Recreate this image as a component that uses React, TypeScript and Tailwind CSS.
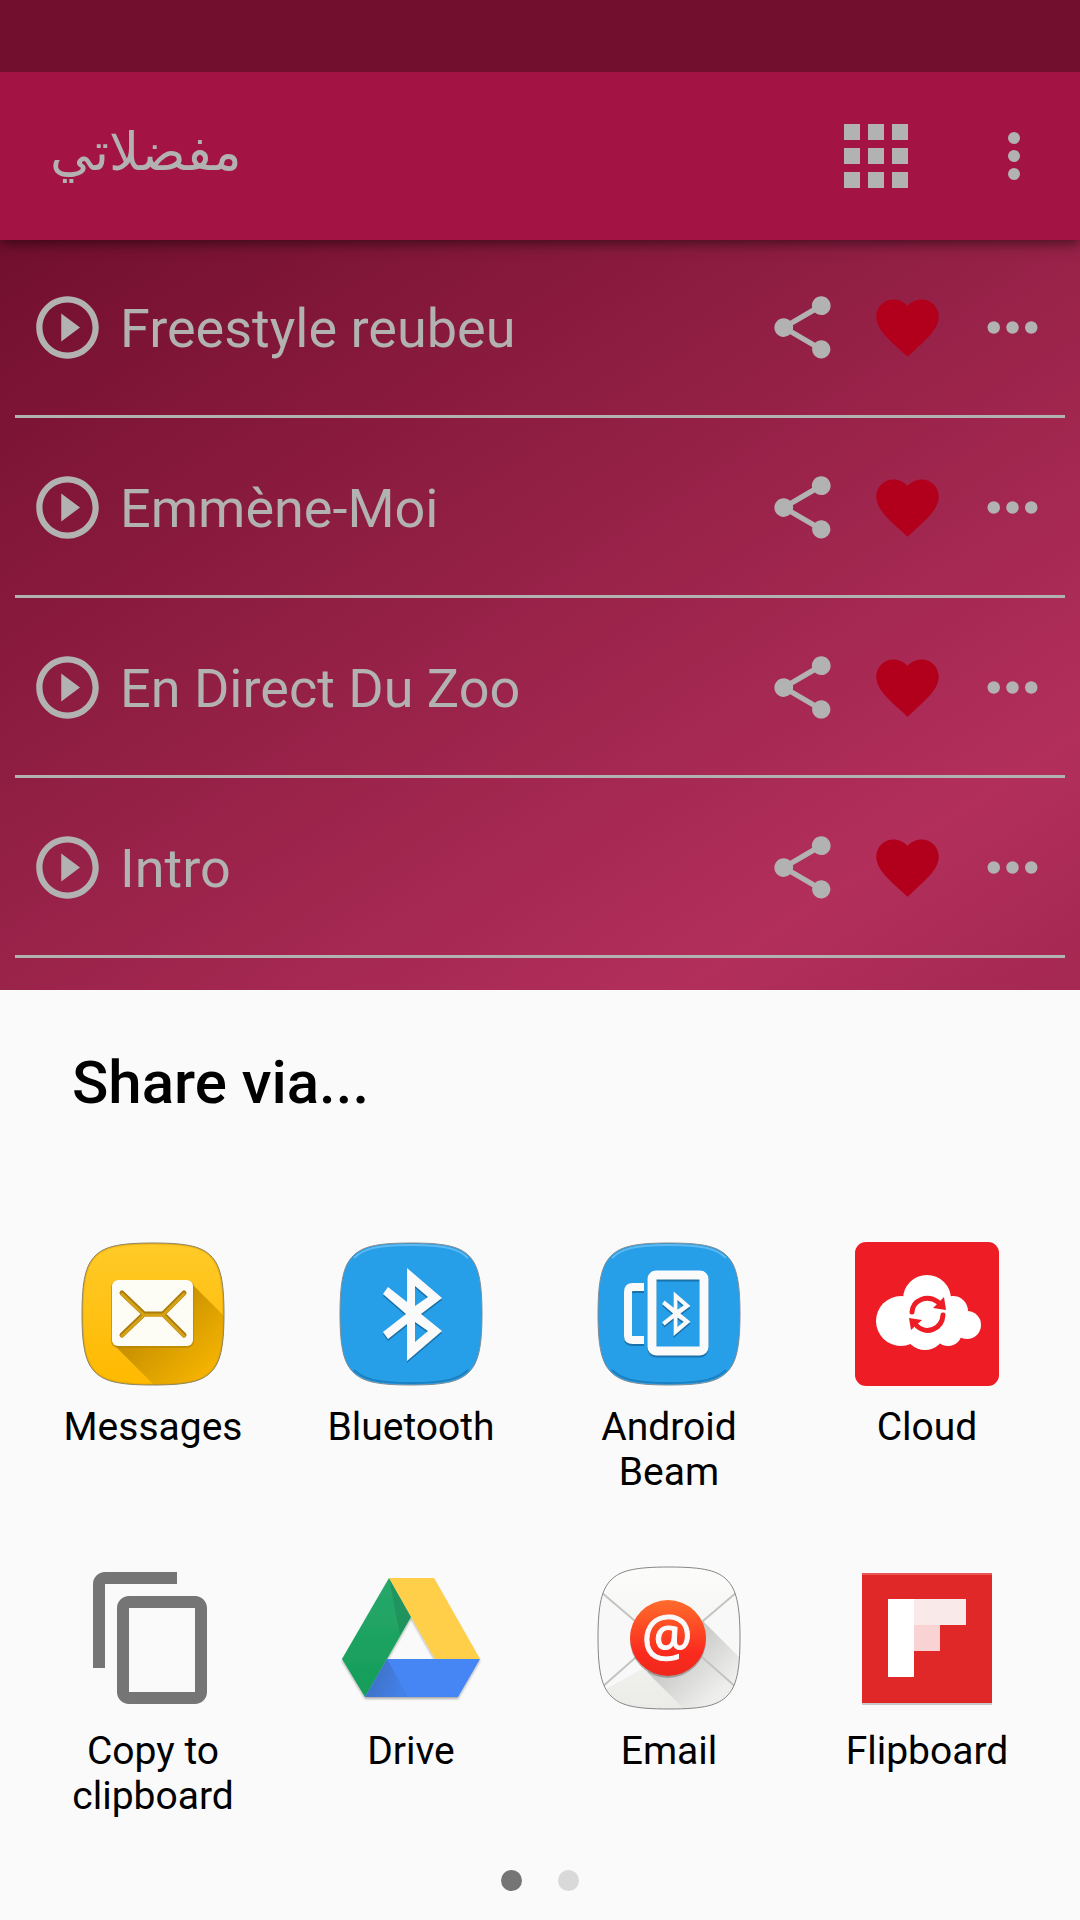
import React from 'react';

interface Track {
  id: number;
  title: string;
}

interface ShareTarget {
  label: string;
  icon: React.ReactNode;
}

const tracks: Track[] = [
  { id: 1, title: 'Freestyle reubeu' },
  { id: 2, title: 'Emmène-Moi' },
  { id: 3, title: 'En Direct Du Zoo' },
  { id: 4, title: 'Intro' },
];

const SQUIRCLE =
  'M72 1C108 1 121 5 130 14C139 23 143 38 143 72C143 106 139 121 130 130C121 139 108 143 72 143C36 143 23 139 14 130C5 121 1 106 1 72C1 38 5 23 14 14C23 5 36 1 72 1Z';

const PlayIcon = () => (
  <svg viewBox="0 0 24 24" className="size-[75px]" fill="currentColor">
    <path d="M10 16.5l6-4.5-6-4.5v9zM12 2C6.48 2 2 6.48 2 12s4.48 10 10 10 10-4.48 10-10S17.52 2 12 2zm0 18c-4.41 0-8-3.59-8-8s3.59-8 8-8 8 3.59 8 8-3.59 8-8 8z" />
  </svg>
);

const ShareIcon = () => (
  <svg viewBox="0 0 24 24" className="size-[75px]" fill="currentColor">
    <path d="M18 16.08c-.76 0-1.44.3-1.96.77L8.91 12.7c.05-.23.09-.46.09-.7s-.04-.47-.09-.7l7.05-4.11c.54.5 1.25.81 2.04.81 1.66 0 3-1.34 3-3s-1.34-3-3-3-3 1.34-3 3c0 .24.04.47.09.7L8.04 9.81C7.5 9.31 6.79 9 6 9c-1.66 0-3 1.34-3 3s1.34 3 3 3c.79 0 1.5-.31 2.04-.81l7.12 4.16c-.05.21-.08.43-.08.65 0 1.61 1.31 2.92 2.92 2.92s2.92-1.31 2.92-2.92-1.31-2.92-2.92-2.92z" />
  </svg>
);

const HeartIcon = () => (
  <svg viewBox="0 0 24 24" className="size-[75px]" fill="currentColor">
    <path d="M12 21.35l-1.45-1.32C5.4 15.36 2 12.28 2 8.5 2 5.42 4.42 3 7.5 3c1.74 0 3.41.81 4.5 2.09C13.09 3.81 14.76 3 16.5 3 19.58 3 22 5.42 22 8.5c0 3.78-3.4 6.86-8.55 11.54L12 21.35z" />
  </svg>
);

const DotsIcon = () => (
  <svg viewBox="0 0 24 24" className="size-[75px]" fill="currentColor">
    <circle cx="6" cy="12" r="2" />
    <circle cx="12" cy="12" r="2" />
    <circle cx="18" cy="12" r="2" />
  </svg>
);

const MessagesIcon = () => (
  <svg viewBox="0 0 144 144" className="size-36">
    <defs>
      <linearGradient id="msg-bg" x1="0" y1="0" x2="0" y2="1">
        <stop offset="0" stopColor="#ffca28" />
        <stop offset="1" stopColor="#ffb900" />
      </linearGradient>
      <linearGradient id="msg-shadow" gradientUnits="userSpaceOnUse" x1="60" y1="70" x2="125" y2="135">
        <stop offset="0" stopColor="#c08b00" />
        <stop offset="1" stopColor="#f6b400" />
      </linearGradient>
      <clipPath id="msg-clip">
        <path d={SQUIRCLE} />
      </clipPath>
    </defs>
    <path d={SQUIRCLE} fill="url(#msg-bg)" />
    <g clipPath="url(#msg-clip)">
      <path d="M111 42L150 81V150H80L34 104Z" fill="url(#msg-shadow)" />
      <path d={SQUIRCLE} fill="none" stroke="#e09b00" strokeWidth="3" opacity=".5" />
    </g>
    <path d={SQUIRCLE} fill="none" stroke="#8b8568" strokeWidth="1" />
    <rect x="30" y="38" width="83" height="68" rx="7" fill="#b08000" opacity=".6" />
    <rect x="31" y="38" width="81" height="66" rx="6" fill="#fdfdf6" />
    <path
      d="M41 51L63 72L41 93M103 51L82 72L103 93M63 72H82"
      fill="none"
      stroke="#a87b0c"
      strokeWidth="5"
      strokeLinecap="round"
      strokeLinejoin="round"
    />
    <path
      d="M41 52L63 73L41 94M103 52L82 73L103 94M63 73H82"
      fill="none"
      stroke="#d6a215"
      strokeWidth="3"
      strokeLinecap="round"
      strokeLinejoin="round"
    />
  </svg>
);

const BlueTile: React.FC<{ children: React.ReactNode }> = ({ children }) => (
  <svg viewBox="0 0 144 144" className="size-36">
    <path d={SQUIRCLE} fill="#279fe8" />
    <path d="M15 16C24 7 37 3 72 3C107 3 120 7 129 16" fill="none" stroke="#5db9f0" strokeWidth="2" />
    <path d="M15 128C24 137 37 141 72 141C107 141 120 137 129 128" fill="none" stroke="#1c80c0" strokeWidth="2" />
    <path d={SQUIRCLE} fill="none" stroke="#7f8c94" strokeWidth="1" />
    {children}
  </svg>
);

const BLUETOOTH =
  'M68 26L103 56L82 72L103 89L68 119V82L49 97L44 90L67 72L44 52L49 45L68 60ZM76 44V64L89 55ZM76 80V100L89 89Z';

const BluetoothIcon = () => (
  <BlueTile>
    <path d={BLUETOOTH} transform="translate(0 2)" fill="#1a72ab" fillRule="evenodd" />
    <path d={BLUETOOTH} fill="#fafafa" fillRule="evenodd" />
  </BlueTile>
);

const BeamShape: React.FC<{ color: string }> = ({ color }) => (
  <g fill="none" stroke={color}>
    <path d="M47 45H36Q31 45 31 50V94Q31 98 36 98H47" strokeWidth="8" />
    <rect x="55" y="33" width="52" height="76" rx="4" strokeWidth="9" />
    <path d={BLUETOOTH} transform="translate(44 37) scale(.48)" fill={color} fillRule="evenodd" stroke="none" />
  </g>
);

const BeamIcon = () => (
  <BlueTile>
    <g transform="translate(0 2)">
      <BeamShape color="#1a72ab" />
    </g>
    <BeamShape color="#fafafa" />
  </BlueTile>
);

const CloudIcon = () => (
  <svg viewBox="0 0 144 144" className="size-36">
    <rect width="144" height="144" rx="11" fill="#ee1c25" />
    <g fill="#fff">
      <circle cx="46" cy="79" r="25" />
      <circle cx="72" cy="57" r="24" />
      <circle cx="98" cy="69" r="15" />
      <circle cx="112" cy="83" r="14" />
      <circle cx="70" cy="88" r="20" />
      <circle cx="93" cy="90" r="14" />
      <path d="M46 60H104V90H46Z" />
    </g>
    <path
      d="M57 70C58 58 72 52 83 60M88 73C87 87 72 93 62 84"
      fill="none"
      stroke="#ee1c25"
      strokeWidth="5"
      strokeLinecap="round"
    />
    <path d="M89 55L91 68L78 66ZM56 88L54 76L67 78Z" fill="#ee1c25" />
  </svg>
);

const CopyIcon = () => (
  <svg viewBox="0 0 24 24" className="size-36" fill="#757575">
    <path d="M16 1H4c-1.1 0-2 .9-2 2v14h2V3h12V1zm3 4H8c-1.1 0-2 .9-2 2v14c0 1.1.9 2 2 2h11c1.1 0 2-.9 2-2V7c0-1.1-.9-2-2-2zm0 16H8V7h11v14z" />
  </svg>
);

const DriveIcon = () => (
  <svg viewBox="0 0 144 144" className="size-36">
    <defs>
      <linearGradient id="drive-green" x1="0" y1="0" x2="0" y2="1">
        <stop offset="0" stopColor="#28a86b" />
        <stop offset="1" stopColor="#149d58" />
      </linearGradient>
      <linearGradient id="drive-fold" gradientUnits="userSpaceOnUse" x1="36" y1="112" x2="62" y2="122">
        <stop offset="0" stopColor="#3f74cb" />
        <stop offset="1" stopColor="#4380e8" />
      </linearGradient>
      <filter id="drive-shadow" x="-10%" y="-10%" width="120%" height="120%">
        <feDropShadow dx="0" dy="2" stdDeviation="1" floodColor="#000" floodOpacity=".3" />
      </filter>
    </defs>
    <g filter="url(#drive-shadow)">
      <path d="M50 12L72 51L48 93L26 131L3 93Z" fill="url(#drive-green)" />
      <path d="M50 12H95L141 93H96Z" fill="#ffcf48" />
      <path d="M48 93H141L119 131H26Z" fill="#4486f4" />
    </g>
    <path d="M50 12L72 51L61 69Z" fill="#1f7a50" opacity=".4" />
    <path d="M48 93L69 131H26Z" fill="url(#drive-fold)" />
  </svg>
);

const EmailIcon = () => (
  <svg viewBox="0 0 144 144" className="size-36">
    <defs>
      <linearGradient id="mail-bg" x1="0" y1="0" x2="0" y2="1">
        <stop offset="0" stopColor="#fcfcfb" />
        <stop offset="1" stopColor="#ebece7" />
      </linearGradient>
      <linearGradient id="mail-shadow" gradientUnits="userSpaceOnUse" x1="80" y1="80" x2="124" y2="124">
        <stop offset="0" stopColor="#c6c6c4" />
        <stop offset="1" stopColor="#eeefec" />
      </linearGradient>
      <linearGradient id="mail-red" x1="0" y1="0" x2="0" y2="1">
        <stop offset="0" stopColor="#ff6d2c" />
        <stop offset=".7" stopColor="#fb2a1e" />
        <stop offset="1" stopColor="#ee281b" />
      </linearGradient>
      <clipPath id="mail-clip">
        <path d={SQUIRCLE} />
      </clipPath>
    </defs>
    <path d={SQUIRCLE} fill="url(#mail-bg)" />
    <g clipPath="url(#mail-clip)">
      <path d="M0 22L72 88L0 128Z" fill="#f8f8f8" />
      <path d="M144 22L72 88L144 128Z" fill="#f8f8f8" />
      <path d="M105 54L150 99V150H94L50 106Z" fill="url(#mail-shadow)" />
      <path d="M4 26L72 84L140 26M4 122L72 62L140 122" fill="none" stroke="#c3c3c0" strokeWidth="2" />
    </g>
    <path d={SQUIRCLE} fill="none" stroke="#858585" strokeWidth="1" />
    <circle cx="71" cy="74" r="38" fill="#000" opacity=".25" />
    <circle cx="71" cy="72" r="38" fill="url(#mail-red)" />
    <text
      x="70"
      y="90"
      textAnchor="middle"
      fill="#fafafa"
      stroke="#fafafa"
      strokeWidth="1"
      className="font-['Noto_Sans',sans-serif] text-[57px]"
    >
      @
    </text>
  </svg>
);

const FlipboardIcon = () => (
  <svg viewBox="0 0 144 144" className="size-36" shapeRendering="crispEdges">
    <path d="M7 9H137V139H7Z" fill="#e12828" />
    <path d="M7 7H137V9H7Z" fill="#e85555" />
    <path d="M7 137H137V139H7Z" fill="#c9c9c9" />
    <path d="M33 33H59V111H33Z" fill="#fff" />
    <path d="M59 33H111V59H59Z" fill="#f9e9e9" />
    <path d="M59 59H85V85H59Z" fill="#f9d2d3" />
  </svg>
);

const targets: ShareTarget[] = [
  { label: 'Messages', icon: <MessagesIcon /> },
  { label: 'Bluetooth', icon: <BluetoothIcon /> },
  { label: 'Android Beam', icon: <BeamIcon /> },
  { label: 'Cloud', icon: <CloudIcon /> },
  { label: 'Copy to clipboard', icon: <CopyIcon /> },
  { label: 'Drive', icon: <DriveIcon /> },
  { label: 'Email', icon: <EmailIcon /> },
  { label: 'Flipboard', icon: <FlipboardIcon /> },
];

const TopBar = () => (
  <header className="bg-[#a31343] text-[#b2b2b2] shadow-[0_4px_12px_rgba(0,0,0,0.5)]">
    <div className="h-[72px] bg-[#730f2e]" />
    <div className="flex h-[168px] items-center pr-[30px] pl-[50px]">
      <h1 lang="ar" dir="rtl" className="pb-2 font-['DejaVu_Sans',sans-serif] text-[53px] leading-[64px]">
        مفضلاتي
      </h1>
      <div className="ml-auto flex items-center gap-[54px]">
        <button aria-label="Grid view">
          <svg viewBox="0 0 24 24" className="size-24" fill="currentColor">
            <path d="M4 8h4V4H4v4zm6 12h4v-4h-4v4zm-6 0h4v-4H4v4zm0-6h4v-4H4v4zm6 0h4v-4h-4v4zm6-10v4h4V4h-4zm-6 4h4V4h-4v4zm6 6h4v-4h-4v4zm0 6h4v-4h-4v4z" />
          </svg>
        </button>
        <button aria-label="More options">
          <svg viewBox="0 0 24 24" className="size-[72px]" fill="currentColor">
            <circle cx="12" cy="6" r="2" />
            <circle cx="12" cy="12" r="2" />
            <circle cx="12" cy="18" r="2" />
          </svg>
        </button>
      </div>
    </div>
  </header>
);

const TrackRow: React.FC<{ track: Track }> = ({ track }) => (
  <li className="flex h-[178px] items-center border-b-3 border-[#b2b2b2] px-[15px]">
    <button aria-label="Play">
      <PlayIcon />
    </button>
    <span className="flex-1 truncate pt-[3px] pl-[15px] text-[54px] leading-[64px]">{track.title}</span>
    <div className="flex gap-[30px]">
      <button aria-label="Share">
        <ShareIcon />
      </button>
      <button aria-label="Favorite" className="text-[#b2001c]">
        <HeartIcon />
      </button>
      <button aria-label="More">
        <DotsIcon />
      </button>
    </div>
  </li>
);

export default function App() {
  return (
    <div className="flex min-h-screen flex-col font-[Roboto,sans-serif]">
      <TopBar />
      <main className="-z-10 flex flex-1 flex-col bg-[linear-gradient(147.26deg,#720f2e,#b22f5b_50%,#720f2e)]">
        <ul className="flex flex-col gap-[2px] px-[15px] pb-8 text-[#b2b2b2]">
          {tracks.map((track) => (
            <TrackRow key={track.id} track={track} />
          ))}
        </ul>
        <section className="flex flex-1 flex-col bg-[#fafafa] pt-[57px] text-black">
          <h2 className="px-[72px] text-[60px] leading-[72px] font-medium">Share via...</h2>
          <div className="mt-[123px] grid grid-cols-4 gap-y-9 px-6">
            {targets.map(({ label, icon }) => (
              <button key={label} className="flex h-72 flex-col items-center gap-[19px] px-6">
                {icon}
                <span className="text-[39px] leading-[45px]">{label}</span>
              </button>
            ))}
          </div>
          <div className="mt-4 flex justify-center gap-9">
            <span className="size-[21px] rounded-full bg-[#757575]" />
            <span className="size-[21px] rounded-full bg-[#d9d9d9]" />
          </div>
        </section>
      </main>
    </div>
  );
}
